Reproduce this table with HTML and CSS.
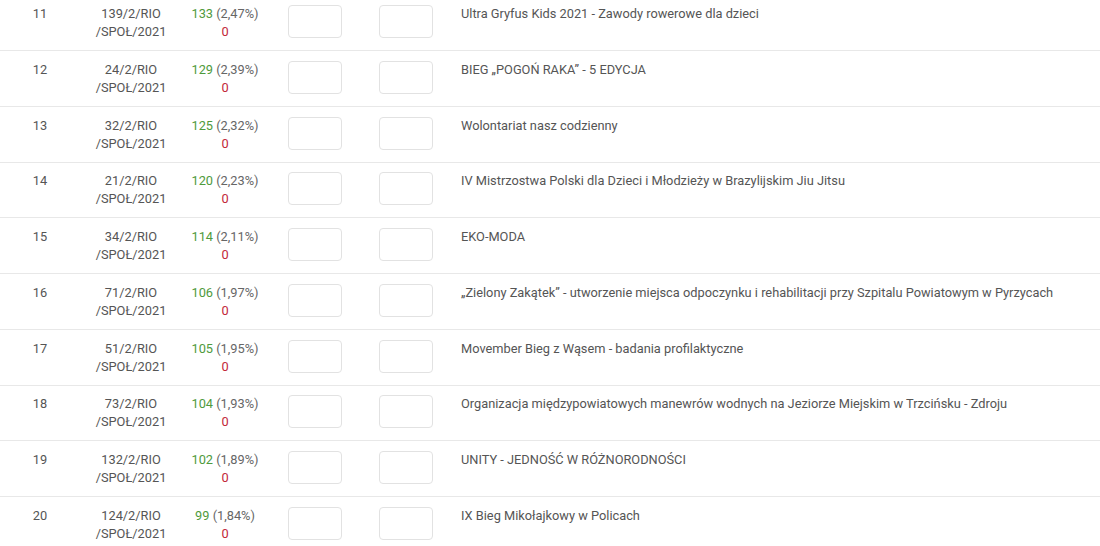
FILE: index.html
```html
<!DOCTYPE html>
<html lang="pl">
<head>
<meta charset="utf-8">
<link rel="stylesheet" href="styles.css">
</head>
<body>
<div class="table">
  <div class="row"><div class="c-no">11</div><div class="c-code">139/2/RIO<br>/SPOŁ/2021</div><div class="c-votes"><span class="yes">133</span> <span class="pct">(2,47%)</span><br><span class="no">0</span></div><div class="c-box"><span class="box"></span></div><div class="c-box"><span class="box"></span></div><div class="c-title">Ultra Gryfus Kids 2021 - Zawody rowerowe dla dzieci</div></div>
  <div class="row"><div class="c-no">12</div><div class="c-code">24/2/RIO<br>/SPOŁ/2021</div><div class="c-votes"><span class="yes">129</span> <span class="pct">(2,39%)</span><br><span class="no">0</span></div><div class="c-box"><span class="box"></span></div><div class="c-box"><span class="box"></span></div><div class="c-title">BIEG „POGOŃ RAKA” - 5 EDYCJA</div></div>
  <div class="row"><div class="c-no">13</div><div class="c-code">32/2/RIO<br>/SPOŁ/2021</div><div class="c-votes"><span class="yes">125</span> <span class="pct">(2,32%)</span><br><span class="no">0</span></div><div class="c-box"><span class="box"></span></div><div class="c-box"><span class="box"></span></div><div class="c-title">Wolontariat nasz codzienny</div></div>
  <div class="row"><div class="c-no">14</div><div class="c-code">21/2/RIO<br>/SPOŁ/2021</div><div class="c-votes"><span class="yes">120</span> <span class="pct">(2,23%)</span><br><span class="no">0</span></div><div class="c-box"><span class="box"></span></div><div class="c-box"><span class="box"></span></div><div class="c-title">IV Mistrzostwa Polski dla Dzieci i Młodzieży w Brazylijskim Jiu Jitsu</div></div>
  <div class="row"><div class="c-no">15</div><div class="c-code">34/2/RIO<br>/SPOŁ/2021</div><div class="c-votes"><span class="yes">114</span> <span class="pct">(2,11%)</span><br><span class="no">0</span></div><div class="c-box"><span class="box"></span></div><div class="c-box"><span class="box"></span></div><div class="c-title">EKO-MODA</div></div>
  <div class="row"><div class="c-no">16</div><div class="c-code">71/2/RIO<br>/SPOŁ/2021</div><div class="c-votes"><span class="yes">106</span> <span class="pct">(1,97%)</span><br><span class="no">0</span></div><div class="c-box"><span class="box"></span></div><div class="c-box"><span class="box"></span></div><div class="c-title">„Zielony Zakątek” - utworzenie miejsca odpoczynku i rehabilitacji przy Szpitalu Powiatowym w Pyrzycach</div></div>
  <div class="row"><div class="c-no">17</div><div class="c-code">51/2/RIO<br>/SPOŁ/2021</div><div class="c-votes"><span class="yes">105</span> <span class="pct">(1,95%)</span><br><span class="no">0</span></div><div class="c-box"><span class="box"></span></div><div class="c-box"><span class="box"></span></div><div class="c-title">Movember Bieg z Wąsem - badania profilaktyczne</div></div>
  <div class="row"><div class="c-no">18</div><div class="c-code">73/2/RIO<br>/SPOŁ/2021</div><div class="c-votes"><span class="yes">104</span> <span class="pct">(1,93%)</span><br><span class="no">0</span></div><div class="c-box"><span class="box"></span></div><div class="c-box"><span class="box"></span></div><div class="c-title">Organizacja międzypowiatowych manewrów wodnych na Jeziorze Miejskim w Trzcińsku - Zdroju</div></div>
  <div class="row"><div class="c-no">19</div><div class="c-code">132/2/RIO<br>/SPOŁ/2021</div><div class="c-votes"><span class="yes">102</span> <span class="pct">(1,89%)</span><br><span class="no">0</span></div><div class="c-box"><span class="box"></span></div><div class="c-box"><span class="box"></span></div><div class="c-title">UNITY - JEDNOŚĆ W RÓŻNORODNOŚCI</div></div>
  <div class="row"><div class="c-no">20</div><div class="c-code">124/2/RIO<br>/SPOŁ/2021</div><div class="c-votes"><span class="yes">99</span> <span class="pct">(1,84%)</span><br><span class="no">0</span></div><div class="c-box"><span class="box"></span></div><div class="c-box"><span class="box"></span></div><div class="c-title">IX Bieg Mikołajkowy w Policach</div></div>
</div>
</body>
</html>
```
FILE: styles.css
```css
html, body {
  margin: 0;
  padding: 0;
  background: #fff;
  overflow: hidden;
}
body {
  font-family: Roboto, "Liberation Sans", sans-serif;
  font-size: 12.8px;
  line-height: 18px;
  color: #555;
}
.table {
  margin-top: -4.75px;
}
.row {
  display: grid;
  grid-template-columns: 80px 102px 84px 98px 84px 1fr;
  align-items: start;
  height: 55.75px;
  box-sizing: border-box;
  border-bottom: 1px solid #e8e8e8;
  padding-top: 9.75px;
}
.c-no, .c-code, .c-votes {
  text-align: center;
}
.c-votes {
  padding-left: 2px;
}
.yes { color: #4f9a3c; }
.no { color: #c2283a; }
.pct { color: #666; }
.c-box {
  display: flex;
  justify-content: center;
}
.box {
  display: block;
  width: 54px;
  height: 33px;
  box-sizing: border-box;
  border: 1px solid #e2e2e2;
  border-radius: 4px;
  background: #fff;
}
.c-title {
  padding-left: 13px;
  white-space: nowrap;
}
```
